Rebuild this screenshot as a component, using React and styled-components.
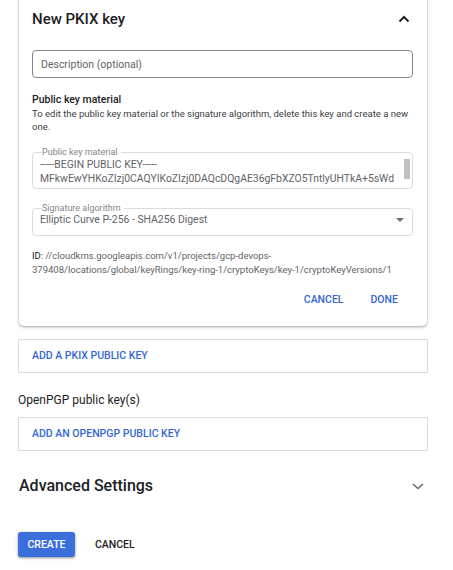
import React from "react";
import styled, { createGlobalStyle } from "styled-components";

const Global = createGlobalStyle`
  html, body { margin: 0; padding: 0; background: #fff; }
  body { font-family: Roboto, "Noto Sans", "Liberation Sans", sans-serif; color: #202124; }
  * { box-sizing: border-box; }
`;

const Page = styled.div`
  width: 453px;
  height: 570px;
  overflow: hidden;
  padding: 0 25px 0 18px;
  display: flex;
  flex-direction: column;
`;

const Card = styled.section`
  margin: -8px 1px 0 1px;
  padding: 17px 14px 19px 13px;
  background: #fff;
  border-radius: 0 0 5px 5px;
  box-shadow: 0 1px 2px rgba(60, 64, 67, 0.3), 0 1px 3px 1px rgba(60, 64, 67, 0.15);
  display: flex;
  flex-direction: column;
`;

const HeaderRow = styled.div`
  display: flex;
  align-items: center;
  justify-content: space-between;
  height: 20px;
`;

const Title = styled.h2`
  margin: 0;
  font-size: ${(p) => p.$size || "15px"};
  font-weight: 500;
  line-height: 20px;
  color: #202124;
`;

const IconBtn = styled.span`
  display: flex;
  width: 24px;
  height: 20px;
  align-items: center;
  justify-content: center;
  margin-right: ${(p) => p.$mr || "0"};
  color: ${(p) => p.$color || "#202124"};
`;

const TextInput = styled.input`
  margin-top: 21px;
  height: 28px;
  width: 100%;
  border: 1px solid #80868b;
  border-radius: 4px;
  padding: 0 8px;
  font-family: inherit;
  font-size: 10.5px;
  color: #202124;
  outline: none;
  &::placeholder { color: #5f6368; }
`;

const SectionHeading = styled.h3`
  margin: 15px 0 0;
  font-size: 10.5px;
  font-weight: 500;
  line-height: 14px;
  color: #202124;
`;

const Helper = styled.p`
  margin: 0;
  font-size: 9.5px;
  line-height: 13px;
  color: #3c4043;
`;

const Outline = styled.fieldset`
  position: relative;
  margin: ${(p) => p.$mt || "0"} 0 0;
  padding: 0 8px ${(p) => p.$pb || "2px"} 7px;
  border: 1px solid #dadce0;
  border-radius: 4px;
  min-width: 0;
`;

const Legend = styled.legend`
  margin-left: 2px;
  padding: 0 3px 0 0;
  font-size: 9px;
  line-height: 8px;
  color: #80868b;
`;

const FieldBody = styled.div`
  display: flex;
  align-items: center;
  justify-content: space-between;
  padding-top: ${(p) => p.$pt || "2px"};
  font-size: 10.4px;
  line-height: 14px;
  color: #5f6368;
  white-space: nowrap;
  overflow: hidden;
`;

const KeyLines = styled.div`
  overflow: hidden;
  padding-right: 14px;
`;

const ScrollThumb = styled.span`
  position: absolute;
  right: 2px;
  top: 3px;
  width: 6px;
  height: 20px;
  background: #c1c1c1;
`;

const IdText = styled.p`
  margin: 13px 0 0;
  font-size: 9.5px;
  line-height: 13.5px;
  color: #5f6368;
  word-break: break-all;
  b { font-weight: 400; color: #202124; }
`;

const Actions = styled.div`
  display: flex;
  justify-content: flex-end;
  gap: 27px;
  margin-top: 17px;
  padding-right: 15px;
`;

const TextButton = styled.button`
  border: 0;
  background: none;
  padding: 0;
  font-family: inherit;
  font-size: 10.5px;
  font-weight: 500;
  line-height: 14px;
  color: ${(p) => p.$color || "#3367d6"};
  cursor: pointer;
`;

const AddBox = styled.div`
  margin-top: ${(p) => p.$mt || "13px"};
  height: 34px;
  border: 1px solid #dadce0;
  display: flex;
  align-items: center;
  padding-left: 13px;
`;

const Label = styled.div`
  margin-top: 19px;
  font-size: 12px;
  line-height: 16px;
  color: #202124;
`;

const AdvancedRow = styled(HeaderRow)`
  margin-top: 24px;
  height: 22px;
  padding-left: 1px;
`;

const Footer = styled.div`
  display: flex;
  align-items: center;
  gap: 20px;
  margin-top: 35px;
`;

const PrimaryButton = styled.button`
  height: 25px;
  width: 57px;
  border: 0;
  border-radius: 3px;
  background: #3b6fdc;
  color: #fff;
  font-family: inherit;
  font-size: 10.5px;
  font-weight: 500;
  box-shadow: 0 1px 2px rgba(60, 64, 67, 0.4), 0 1px 3px 1px rgba(60, 64, 67, 0.15);
`;

const ChevronUp = () => (
  <svg width="12" height="8" viewBox="0 0 12 8" fill="none">
    <path d="M1.5 6.5 L6 2 L10.5 6.5" stroke="currentColor" strokeWidth="2" />
  </svg>
);

const ChevronDown = () => (
  <svg width="12" height="7" viewBox="0 0 12 7" fill="none">
    <path d="M1 1 L6 5.5 L11 1" stroke="currentColor" strokeWidth="1.4" />
  </svg>
);

const Caret = () => (
  <svg width="8" height="4" viewBox="0 0 8 4">
    <path d="M0 0 L8 0 L4 4 Z" fill="#757575" />
  </svg>
);

export default function App() {
  return (
    <>
      <Global />
      <Page>
        <Card>
          <HeaderRow>
            <Title>New PKIX key</Title>
            <IconBtn $mr="-3px">
              <ChevronUp />
            </IconBtn>
          </HeaderRow>
          <TextInput placeholder="Description (optional)" />
          <SectionHeading>Public key material</SectionHeading>
          <Helper>
            To edit the public key material or the signature algorithm, delete this key and create a new one.
          </Helper>
          <Outline $mt="15px">
            <Legend>Public key material</Legend>
            <FieldBody>
              <KeyLines>
                <div>-----BEGIN PUBLIC KEY-----</div>
                <div>MFkwEwYHKoZIzj0CAQYIKoZIzj0DAQcDQgAE36gFbXZO5TntlyUHTkA+5sWd</div>
              </KeyLines>
            </FieldBody>
            <ScrollThumb />
          </Outline>
          <Outline $mt="15px" $pb="8px">
            <Legend>Signature algorithm</Legend>
            <FieldBody $pt="1px">
              <span>Elliptic Curve P-256 - SHA256 Digest</span>
              <Caret />
            </FieldBody>
          </Outline>
          <IdText>
            <b>ID:</b> //cloudkms.googleapis.com/v1/projects/gcp-devops-
            <br />
            379408/locations/global/keyRings/key-ring-1/cryptoKeys/key-1/cryptoKeyVersions/1
          </IdText>
          <Actions>
            <TextButton>CANCEL</TextButton>
            <TextButton>DONE</TextButton>
          </Actions>
        </Card>
        <AddBox>
          <TextButton>ADD A PKIX PUBLIC KEY</TextButton>
        </AddBox>
        <Label>OpenPGP public key(s)</Label>
        <AddBox $mt="9px">
          <TextButton>ADD AN OPENPGP PUBLIC KEY</TextButton>
        </AddBox>
        <AdvancedRow>
          <Title $size="16px">Advanced Settings</Title>
          <IconBtn $color="#5f6368" $mr="-2px">
            <ChevronDown />
          </IconBtn>
        </AdvancedRow>
        <Footer>
          <PrimaryButton>CREATE</PrimaryButton>
          <TextButton $color="#202124">CANCEL</TextButton>
        </Footer>
      </Page>
    </>
  );
}
